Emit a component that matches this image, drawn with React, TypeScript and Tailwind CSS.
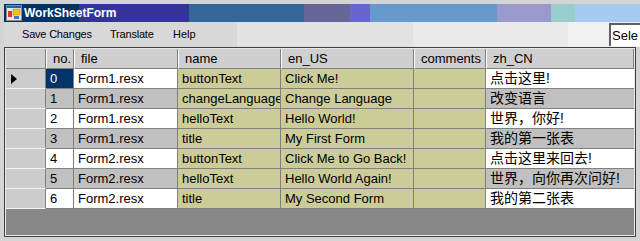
import React from 'react';

type Row = { no: number; file: string; name: string; en: string; comments: string; zh: string };

const rows: Row[] = [
  { no: 0, file: 'Form1.resx', name: 'buttonText', en: 'Click Me!', comments: '', zh: '点击这里!' },
  { no: 1, file: 'Form1.resx', name: 'changeLanguage', en: 'Change Language', comments: '', zh: '改变语言' },
  { no: 2, file: 'Form1.resx', name: 'helloText', en: 'Hello World!', comments: '', zh: '世界，你好!' },
  { no: 3, file: 'Form1.resx', name: 'title', en: 'My First Form', comments: '', zh: '我的第一张表' },
  { no: 4, file: 'Form2.resx', name: 'buttonText', en: 'Click Me to Go Back!', comments: '', zh: '点击这里来回去!' },
  { no: 5, file: 'Form2.resx', name: 'helloText', en: 'Hello World Again!', comments: '', zh: '世界，向你再次问好!' },
  { no: 6, file: 'Form2.resx', name: 'title', en: 'My Second Form', comments: '', zh: '我的第二张表' },
];

const cols = 'grid grid-cols-[40px_28px_104px_103px_133px_72px_1fr]';

function FormIcon() {
  return (
    <svg width="16" height="16" viewBox="0 0 16 16" className="shrink-0">
      <rect x="0.5" y="0.5" width="15" height="15" fill="#e8e8e8" stroke="#8c8c8c" />
      <rect x="1" y="1" width="14" height="2" fill="#2a5fb0" />
      <rect x="2" y="6" width="4" height="6" fill="#d83a2a" />
      <rect x="7" y="4" width="7" height="6" fill="#f5c400" stroke="#b08800" strokeWidth="0.5" />
      <rect x="8" y="11" width="5" height="3" fill="#3a7ad8" />
    </svg>
  );
}

function HeaderCell({ label }: { label: string }) {
  return (
    <div className="h-[20px] flex items-center pl-[6px] bg-[#cfcfcf] border-b border-b-[#808080] border-r border-r-[#808080] border-l border-l-white overflow-hidden whitespace-nowrap">
      {label}
    </div>
  );
}

function Cell({ children, bg, className = '' }: { children?: React.ReactNode; bg: string; className?: string }) {
  return (
    <div className={`h-[20px] flex items-center pl-[4px] border-b border-r border-[#808080] overflow-hidden whitespace-nowrap ${bg} ${className}`}>
      {children}
    </div>
  );
}

export default function App() {
  return (
    <div
      className="w-[640px] h-[241px] overflow-hidden bg-[#d4d4d4] pt-[4px] pl-[4px] flex flex-col text-black"
      style={{ fontFamily: '"Liberation Sans", Arial, sans-serif' }}
    >
      {/* title bar */}
      <div className="h-[18px] flex items-center gap-[2px] pl-[2px] bg-[linear-gradient(90deg,#003366_0,#003366_75px,#333399_75px,#333399_185px,#336699_185px,#336699_300px,#666699_300px,#666699_346px,#6666cc_346px,#6666cc_366px,#6699cc_366px,#6699cc_493px,#9999cc_493px,#9999cc_547px,#99cccc_547px,#99cccc_571px,#a6caf0_571px)]">
        <FormIcon />
        <span className="text-white font-bold text-[12px] leading-none">WorkSheetForm</span>
      </div>

      {/* menu bar */}
      <div className="h-[25px] flex items-center pl-[18px] text-[11px] bg-[linear-gradient(90deg,#d8d8d8_0,#d8d8d8_233px,#e2e2e2_233px,#e2e2e2_409px,#eaeaea_409px,#eaeaea_564px,#f1f1f1_564px)]">
        <span className="w-[88px] tracking-[-0.2px]">Save Changes</span>
        <span className="w-[63px] tracking-[-0.2px]">Translate</span>
        <span>Help</span>
        <div className="ml-auto h-[23px] w-[31px] bg-white border-t-2 border-l-2 border-t-[#606060] border-l-[#606060] text-[13px] flex items-center pl-[1px] overflow-hidden whitespace-nowrap">
          Sele
        </div>
      </div>

      {/* data grid */}
      <div className="flex-1 mr-[4px] mb-[4px] border border-[#404040] flex flex-col">
        <div className="flex-1 border border-[#e8e8e8] bg-[#888888] text-[13px] flex flex-col">
          <div className={cols}>
            <div className="h-[20px] bg-[#cfcfcf] border-b border-r border-[#808080]" />
            <HeaderCell label="no." />
            <HeaderCell label="file" />
            <HeaderCell label="name" />
            <HeaderCell label="en_US" />
            <HeaderCell label="comments" />
            <HeaderCell label="zh_CN" />
          </div>
          {rows.map((r, i) => {
            const plain = i % 2 === 0 ? 'bg-white' : 'bg-[#c0c0c0]';
            const khaki = 'bg-[#cccc99]';
            return (
              <div key={r.no} className={cols}>
                <div className="h-[20px] bg-[#cccccc] border-b border-b-[#f4f4f4] border-r border-r-[#808080] flex items-center pl-[5px]">
                  {i === 0 && (
                    <svg width="6" height="10" viewBox="0 0 6 10">
                      <path d="M0 0 L6 5 L0 10 Z" fill="#000" />
                    </svg>
                  )}
                </div>
                <Cell bg={i === 0 ? 'bg-[#003366]' : plain} className={i === 0 ? 'text-white' : ''}>
                  {r.no}
                </Cell>
                <Cell bg={plain}>{r.file}</Cell>
                <Cell bg={khaki}>{r.name}</Cell>
                <Cell bg={khaki}>{r.en}</Cell>
                <Cell bg={khaki}>{r.comments}</Cell>
                <Cell bg={plain} className="text-[14px] border-r-0">
                  <span style={{ fontFamily: '"Liberation Sans", "Noto Sans CJK SC", sans-serif' }}>{r.zh}</span>
                </Cell>
              </div>
            );
          })}
        </div>
      </div>
    </div>
  );
}
